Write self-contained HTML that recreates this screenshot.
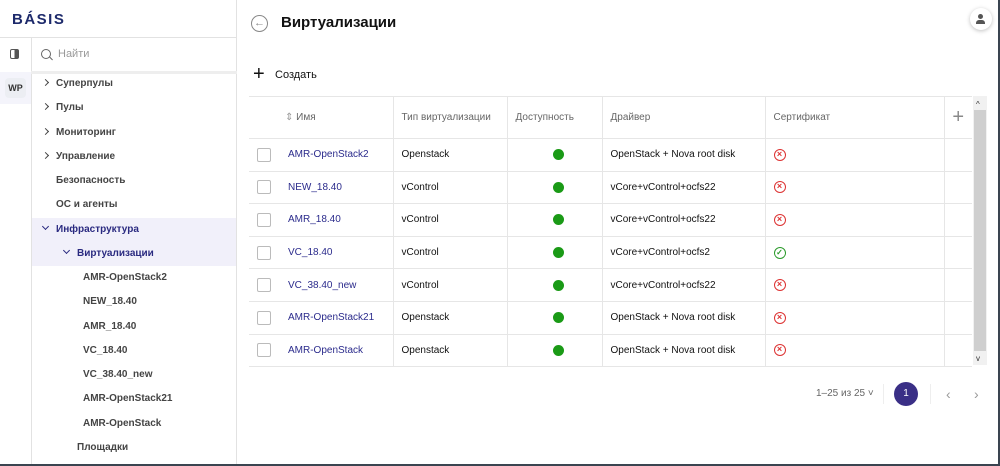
<!DOCTYPE html><html><head><meta charset="utf-8"><style>
*{box-sizing:border-box;margin:0;padding:0}
body{width:1000px;height:466px;overflow:hidden;font-family:"Liberation Sans",sans-serif;background:#fff;position:relative;color:#222}
.abs{position:absolute}
.side{left:0;top:0;width:237px;height:466px;border-right:1px solid #e2e2e2}
.logo{left:12px;top:11px;font-size:15px;font-weight:bold;color:#1d2a6b;letter-spacing:1.5px}
.mi{position:absolute;font-size:10px;font-weight:bold;color:#444;height:24px;line-height:24px}
.chev{display:inline-block;width:5px;height:5px;border-right:1.3px solid #444;border-bottom:1.3px solid #444;transform:rotate(-45deg);margin-right:8px;vertical-align:1px}
.chd{transform:rotate(45deg);vertical-align:3px;border-color:#2a2a80}
table{border-collapse:collapse;position:absolute;left:249px;top:96px;width:723px;font-size:10px}
td,th{border-bottom:1px solid #e6e6e6;border-right:1px solid #e6e6e6;text-align:left;font-weight:normal;padding:0 0 0 8px;height:32.6px}
td{color:#111}
th{height:42px;color:#666;border-top:1px solid #e6e6e6}
td:last-child,th:last-child{border-right:none}
td:first-child,th:first-child{border-right:none}
.cb{width:14px;height:14px;border:1.2px solid #bbb;border-radius:2px;display:inline-block;vertical-align:middle}
td.nm{color:#2b2b8c}
.dot{width:11px;height:11px;border-radius:50%;background:#1a9a16;margin:0 auto}
.x{width:12px;height:12px;border:1.3px solid #d33;border-radius:50%;color:#d33;font-size:9px;line-height:9px;text-align:center;font-weight:bold}
.ok{width:12px;height:12px;border:1.3px solid #2a9a2a;border-radius:50%;color:#2a9a2a;font-size:8px;line-height:9px;text-align:center;font-weight:bold}
</style></head><body>
<div class="abs side"></div>
<div class="abs" style="left:0;top:37px;width:237px;border-top:1px solid #e2e2e2"></div>
<div class="abs" style="left:31px;top:37px;width:1px;height:429px;background:#e2e2e2"></div>
<div class="abs" style="left:31px;top:71px;width:206px;height:3px;background:#eee"></div>
<div class="abs logo">BÁSIS</div>
<div class="abs" style="left:10px;top:49px;width:9px;height:10px;border:1.5px solid #555;border-radius:2px;background:linear-gradient(90deg,#fff 50%,#555 50%)"></div>
<div class="abs" style="left:5px;top:78px;width:21px;height:20px;background:#eceef3;border-radius:4px;font-size:9px;font-weight:bold;color:#333;text-align:center;line-height:20px">WP</div>
<div class="abs" style="left:0;top:72px;width:31px;height:32px;background:#f4f4fb;z-index:-1"></div>
<div class="abs" style="left:41px;top:49px;width:10px;height:10px;border:1.4px solid #666;border-radius:50%"></div>
<div class="abs" style="left:49px;top:58px;width:4px;height:1.4px;background:#666;transform:rotate(45deg)"></div>
<div class="abs" style="left:58px;top:48px;font-size:11px;color:#999">Найти</div>
<div class="abs" style="left:32px;top:218px;width:204px;height:48px;background:#f1f0fa"></div>
<div class="mi" style="left:43px;top:72px"><span class="chev"></span>Суперпулы</div>
<div class="mi" style="left:43px;top:96px"><span class="chev"></span>Пулы</div>
<div class="mi" style="left:43px;top:121px"><span class="chev"></span>Мониторинг</div>
<div class="mi" style="left:43px;top:145px"><span class="chev"></span>Управление</div>
<div class="mi" style="left:56px;top:169px">Безопасность</div>
<div class="mi" style="left:56px;top:193px">ОС и агенты</div>
<div class="mi" style="left:43px;top:218px;color:#2a2a80"><span class="chev chd"></span>Инфраструктура</div>
<div class="mi" style="left:64px;top:242px;color:#2a2a80"><span class="chev chd"></span>Виртуализации</div>
<div class="mi" style="left:83px;top:266px">AMR-OpenStack2</div>
<div class="mi" style="left:83px;top:290px">NEW_18.40</div>
<div class="mi" style="left:83px;top:315px">AMR_18.40</div>
<div class="mi" style="left:83px;top:339px">VC_18.40</div>
<div class="mi" style="left:83px;top:363px">VC_38.40_new</div>
<div class="mi" style="left:83px;top:387px">AMR-OpenStack21</div>
<div class="mi" style="left:83px;top:412px">AMR-OpenStack</div>
<div class="mi" style="left:77px;top:436px">Площадки</div>

<div class="abs" style="left:251px;top:15px;width:17px;height:17px;border:1.3px solid #888;border-radius:50%;color:#888;font-size:11px;line-height:14px;text-align:center">←</div>
<div class="abs" style="left:281px;top:14px;font-size:15px;font-weight:bold;color:#111">Виртуализации</div>
<div class="abs" style="left:970px;top:8px;width:22px;height:22px;border-radius:50%;box-shadow:0 1px 4px rgba(0,0,0,.25);background:#fff"></div>
<div class="abs" style="left:978px;top:14px;width:5px;height:5px;border-radius:50%;background:#555"></div>
<div class="abs" style="left:976px;top:20px;width:9px;height:4px;border-radius:3px 3px 0 0;background:#555"></div>
<div class="abs" style="left:253px;top:65px;font-size:20px;line-height:18px;color:#111">+</div>
<div class="abs" style="left:275px;top:69px;font-size:11px;color:#111">Создать</div>

<table>
<tr><th style="width:36px"></th><th style="width:108px;padding-left:0"><span style="color:#999">⇕</span> Имя</th><th style="width:114px">Тип виртуализации</th><th style="width:95px">Доступность</th><th style="width:163px">Драйвер</th><th style="width:179px">Сертификат</th><th style="font-size:20px;color:#888;text-align:center;padding:0">+</th></tr>
<tr><td><span class="cb"></span></td><td class="nm" style="padding-left:3px">AMR-OpenStack2</td><td>Openstack</td><td><div class="dot"></div></td><td>OpenStack + Nova root disk</td><td><div class="x">×</div></td><td></td></tr>
<tr><td><span class="cb"></span></td><td class="nm" style="padding-left:3px">NEW_18.40</td><td>vControl</td><td><div class="dot"></div></td><td>vCore+vControl+ocfs22</td><td><div class="x">×</div></td><td></td></tr>
<tr><td><span class="cb"></span></td><td class="nm" style="padding-left:3px">AMR_18.40</td><td>vControl</td><td><div class="dot"></div></td><td>vCore+vControl+ocfs22</td><td><div class="x">×</div></td><td></td></tr>
<tr><td><span class="cb"></span></td><td class="nm" style="padding-left:3px">VC_18.40</td><td>vControl</td><td><div class="dot"></div></td><td>vCore+vControl+ocfs2</td><td><div class="ok">✓</div></td><td></td></tr>
<tr><td><span class="cb"></span></td><td class="nm" style="padding-left:3px">VC_38.40_new</td><td>vControl</td><td><div class="dot"></div></td><td>vCore+vControl+ocfs22</td><td><div class="x">×</div></td><td></td></tr>
<tr><td><span class="cb"></span></td><td class="nm" style="padding-left:3px">AMR-OpenStack21</td><td>Openstack</td><td><div class="dot"></div></td><td>OpenStack + Nova root disk</td><td><div class="x">×</div></td><td></td></tr>
<tr><td><span class="cb"></span></td><td class="nm" style="padding-left:3px">AMR-OpenStack</td><td>Openstack</td><td><div class="dot"></div></td><td>OpenStack + Nova root disk</td><td><div class="x">×</div></td><td></td></tr>
</table>
<div class="abs" style="left:973px;top:96px;width:14px;height:269px;background:#f1f1f1"></div>
<div class="abs" style="left:974px;top:110px;width:12px;height:241px;background:#cfcfcf"></div>
<div class="abs" style="left:976px;top:100px;font-size:8px;color:#333">^</div>
<div class="abs" style="left:976px;top:354px;font-size:8px;color:#333">v</div>

<div class="abs" style="left:816px;top:388px;font-size:10px;color:#666">1–25 из 25 ˅</div>
<div class="abs" style="left:883px;top:384px;width:1px;height:20px;background:#eee"></div>
<div class="abs" style="left:894px;top:382px;width:24px;height:24px;border-radius:50%;background:#3a2f86;color:#fff;font-size:10px;text-align:center;line-height:24px">1</div>
<div class="abs" style="left:930px;top:384px;width:1px;height:20px;background:#eee"></div>
<div class="abs" style="left:946px;top:386px;font-size:14px;color:#999">‹</div>
<div class="abs" style="left:974px;top:386px;font-size:14px;color:#999">›</div>
<div class="abs" style="left:998px;top:0;width:2px;height:466px;background:#3a4450"></div>
<div class="abs" style="left:0;top:464px;width:1000px;height:2px;background:#3a4450"></div>
</body></html>
